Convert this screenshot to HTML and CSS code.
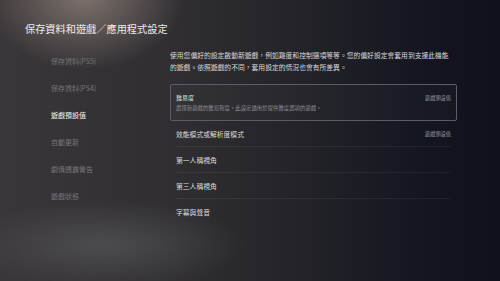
FILE: index.html
```html
<!DOCTYPE html>
<html lang="zh-Hant">
<head>
<meta charset="utf-8">
<link rel="stylesheet" href="styles.css">
</head>
<body>
<div class="screen">
  <h1 class="title">保存資料和遊戲／應用程式設定</h1>
  <div class="columns">
    <nav class="side">
      <div class="side-item">保存資料(PS5)</div>
      <div class="side-item">保存資料(PS4)</div>
      <div class="side-item active">遊戲預設值</div>
      <div class="side-item">自動更新</div>
      <div class="side-item">劇情透露警告</div>
      <div class="side-item">遊戲狀態</div>
    </nav>
    <main class="main">
      <p class="desc">使用您偏好的設定啟動新遊戲，例如難度和控制選項等等。您的偏好設定會套用到支援此機能的遊戲。依照遊戲的不同，套用設定的情況也會有所差異。</p>
      <div class="list">
        <div class="card">
          <div class="row-top">
            <span class="label">難易度</span>
            <span class="value">遊戲預設值</span>
          </div>
          <div class="sub">選擇新遊戲的難易程度。此設定適用於提供難度選項的遊戲。</div>
        </div>
        <div class="row">
          <span class="label">效能模式或解析度模式</span>
          <span class="value">遊戲預設值</span>
        </div>
        <div class="row">
          <span class="label">第一人稱視角</span>
        </div>
        <div class="row">
          <span class="label">第三人稱視角</span>
        </div>
        <div class="row last">
          <span class="label">字幕與聲音</span>
        </div>
      </div>
    </main>
  </div>
</div>
</body>
</html>
```

FILE: styles.css
```css
* { box-sizing: border-box; margin: 0; padding: 0; }
html, body { width: 500px; height: 281px; overflow: hidden; }
body {
  font-family: "Noto Sans CJK TC", "Noto Sans CJK SC", "Noto Sans", sans-serif;
  color: #e6e6e6;
}
.screen {
  width: 500px;
  height: 281px;
  padding: 22px 0 0 25px;
  background:
    radial-gradient(ellipse 100px 75px at 85px -5px, rgba(175,158,146,0.6), rgba(175,158,146,0) 100%),
    radial-gradient(ellipse 140px 45px at 105px 245px, rgba(105,108,112,0.45), rgba(105,108,112,0) 100%),
    linear-gradient(90deg, #3a3639 0%, #302e32 35%, #222228 62%, #141520 85%, #10111b 100%);
}
.title {
  font-size: 10.2px;
  font-weight: 400;
  line-height: 14px;
  color: #ececec;
  letter-spacing: 0;
}
.columns {
  display: flex;
  margin-top: 17px;
}
.side {
  width: 145px;
  padding-left: 26px;
  padding-top: 1px;
  display: flex;
  flex-direction: column;
}
.side-item {
  font-size: 7px;
  line-height: 10px;
  height: 27px;
  padding-top: 2px;
  color: #77757a;
}
.side-item.active { color: #f2f2f2; }
.main {
  width: 290px;
}
.desc {
  font-size: 6.8px;
  line-height: 12px;
  color: #d8d8dc;
  width: 285px;
  margin-top: -4px;
}
.list {
  margin-top: 11px;
  width: 287px;
}
.card {
  border: 1px solid #5c5c64;
  border-radius: 2px;
  padding: 6px 5px 5px 5px;
  height: 37px;
  background: rgba(255,255,255,0.02);
}
.row-top {
  display: flex;
  justify-content: space-between;
  align-items: center;
  height: 12px;
}
.label {
  font-size: 6.8px;
  color: #dcdcdc;
}
.card .label { font-size: 6px; }
.value {
  font-size: 5.2px;
  color: #9a9aa2;
}
.sub {
  font-size: 5.4px;
  color: #8e8e94;
  margin-top: 1px;
}
.row {
  display: flex;
  justify-content: space-between;
  align-items: center;
  height: 26px;
  margin: 0 6px;
  border-bottom: 1px solid rgba(255,255,255,0.06);
}
.row.last { border-bottom: none; }
```
